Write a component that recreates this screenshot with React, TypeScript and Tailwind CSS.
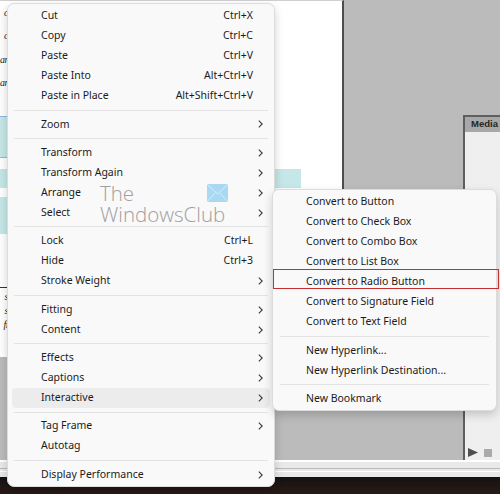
import * as React from 'react';

type Entry = { label: string; shortcut?: string; sub?: boolean; active?: boolean } | 'sep';

const mainMenu: Entry[] = [
  { label: 'Cut', shortcut: 'Ctrl+X' },
  { label: 'Copy', shortcut: 'Ctrl+C' },
  { label: 'Paste', shortcut: 'Ctrl+V' },
  { label: 'Paste Into', shortcut: 'Alt+Ctrl+V' },
  { label: 'Paste in Place', shortcut: 'Alt+Shift+Ctrl+V' },
  'sep',
  { label: 'Zoom', sub: true },
  'sep',
  { label: 'Transform', sub: true },
  { label: 'Transform Again', sub: true },
  { label: 'Arrange', sub: true },
  { label: 'Select', sub: true },
  'sep',
  { label: 'Lock', shortcut: 'Ctrl+L' },
  { label: 'Hide', shortcut: 'Ctrl+3' },
  { label: 'Stroke Weight', sub: true },
  'sep',
  { label: 'Fitting', sub: true },
  { label: 'Content', sub: true },
  'sep',
  { label: 'Effects', sub: true },
  { label: 'Captions', sub: true },
  { label: 'Interactive', sub: true, active: true },
  'sep',
  { label: 'Tag Frame', sub: true },
  { label: 'Autotag' },
  'sep',
  { label: 'Display Performance', sub: true },
];

const interactiveMenu: Entry[] = [
  { label: 'Convert to Button' },
  { label: 'Convert to Check Box' },
  { label: 'Convert to Combo Box' },
  { label: 'Convert to List Box' },
  { label: 'Convert to Radio Button' },
  { label: 'Convert to Signature Field' },
  { label: 'Convert to Text Field' },
  'sep',
  { label: 'New Hyperlink...' },
  { label: 'New Hyperlink Destination...' },
  'sep',
  { label: 'New Bookmark' },
];

function Chevron() {
  return (
    <svg width="5" height="8" viewBox="0 0 5 8" fill="none">
      <path d="M0.8 0.6 L4.2 4 L0.8 7.4" stroke="#3a3a3a" strokeWidth="1.1" />
    </svg>
  );
}

function MenuList({ items, sepInset }: { items: Entry[]; sepInset: string }) {
  return (
    <div className="flex flex-col px-[4px] pt-[2px] pb-[1px]">
      {items.map((it, i) =>
        it === 'sep' ? (
          <div key={i} className={`h-[8.4px] flex items-center ${sepInset}`}>
            <div className="h-px w-full bg-[#e3e3e3]" />
          </div>
        ) : (
          <div
            key={i}
            className={`h-5 flex items-center pl-[29px] rounded-[4px] ${it.active ? 'bg-[#ececec]' : ''}`}
          >
            <span className="flex-1 whitespace-nowrap">{it.label}</span>
            {it.shortcut && <span className="whitespace-nowrap">{it.shortcut}</span>}
            <span className="w-[17px] flex items-center pl-[5px]">{it.sub && <Chevron />}</span>
          </div>
        )
      )}
    </div>
  );
}

function Watermark() {
  return (
    <div className="absolute left-[100px] top-[183px] flex flex-col text-[20.5px] leading-[21px] font-light text-[#a0a0a0] font-['Open_Sans',sans-serif] pointer-events-none">
      <div className="flex items-start h-[21px]">
        <span>The</span>
        <svg width="21" height="18" viewBox="0 0 21 18" className="ml-[73px] mt-[1px]">
          <rect width="21" height="18" fill="#a9d8f2" />
          <path d="M0 0 L10.5 10 L21 0 M0 18 L8 9 M21 18 L13 9" stroke="#d7eefa" strokeWidth="1" fill="none" />
        </svg>
      </div>
      <span>WindowsClub</span>
    </div>
  );
}

function Fragment({ text, h }: { text: string; h: string }) {
  return (
    <span className={`w-[8px] ${h} flex justify-end items-center whitespace-nowrap tracking-[-0.5px]`}>{text}</span>
  );
}

export default function App() {
  return (
    <div className="relative w-[500px] h-[494px] overflow-hidden bg-[#bbbbbb] flex flex-col font-['Noto_Sans','Open_Sans',sans-serif] text-[10.5px] text-[#1b1b1b]">
      {/* Document canvas behind the menu */}
      <div className="h-[460px] flex">
        <div className="w-[344px] flex flex-col">
          <div className="h-[357px] bg-white border-r-2 border-[#4d4d4d] border-t border-t-[#d0d0d0] flex flex-col">
            <div className="h-[100px] pt-[-1px] flex flex-col font-['Liberation_Serif',serif] italic text-[10px] text-[#222]">
              <Fragment text="c" h="h-[23.3px]" />
              <Fragment text="c" h="h-[23.3px]" />
              <Fragment text="ar" h="h-[23.3px]" />
              <Fragment text="ar" h="h-[23.3px]" />
            </div>
            <div className="mt-[15px] h-[42px] w-[260px] bg-[#c6e7e7] border-y border-[#8fb5e0]" />
            <div className="mt-[11px] h-[19px] w-[301px] bg-[#c6e7e7]" />
            <div className="mt-[9px] h-[37px] w-[260px] bg-[#c6e7e7]" />
            <div className="mt-[53px] w-[200px] border-t border-[#333]" />
            <div className="pt-[1px] flex flex-col font-['Liberation_Serif',serif] italic text-[10px] text-[#222]">
              <Fragment text="s" h="h-[14px]" />
              <Fragment text="s" h="h-[14px]" />
              <Fragment text="fi" h="h-[14px]" />
            </div>
          </div>
        </div>
        <div className="flex-1 flex justify-end">
          <div className="w-[37px] mt-[115px] flex flex-col border-t-2 border-l-2 border-[#5e5e5e] bg-[#efefef]">
            <div className="h-[15px] bg-[#a8a8a8] flex items-center pl-[6px] text-[9.5px] font-bold text-[#262626] font-['Liberation_Sans',sans-serif]">
              Media
            </div>
            <div className="flex-1 flex items-end pb-[3px] pl-[3px] gap-[6px]">
              <svg width="10" height="9" viewBox="0 0 10 9">
                <path d="M0 0 L10 4.5 L0 9 Z" fill="#4f4f4f" />
              </svg>
              <div className="w-[8px] h-[8px] bg-[#a9a9a9]" />
            </div>
          </div>
        </div>
      </div>
      <div className="h-[17px] bg-[#e9e9e9] border-t-2 border-white flex flex-col">
        <div className="mt-[6px] h-px bg-[#b8b8b8]" />
        <div className="mt-[2px] h-px bg-white" />
      </div>
      <div className="flex-1 bg-gradient-to-b from-[#141212] to-[#2a1a16]" />

      {/* Main context menu */}
      <div className="absolute left-[7px] top-[3px] w-[268px] bg-[#f9f9f9] border border-[#dcdcdc] rounded-[7px] shadow-[0_4px_10px_rgba(0,0,0,0.18)]">
        <MenuList items={mainMenu} sepInset="mx-[2px]" />
      </div>

      {/* Interactive submenu */}
      <div className="absolute left-[272px] top-[189px] w-[225px] bg-[#f9f9f9] border border-[#dcdcdc] rounded-[7px] shadow-[0_4px_10px_rgba(0,0,0,0.18)]">
        <MenuList items={interactiveMenu} sepInset="mx-[3px]" />
      </div>

      {/* Highlight around Convert to Radio Button */}
      <div className="absolute left-[273px] top-[269px] w-[226px] h-[20px] border border-[#c62f2f]" />

      <Watermark />
    </div>
  );
}
